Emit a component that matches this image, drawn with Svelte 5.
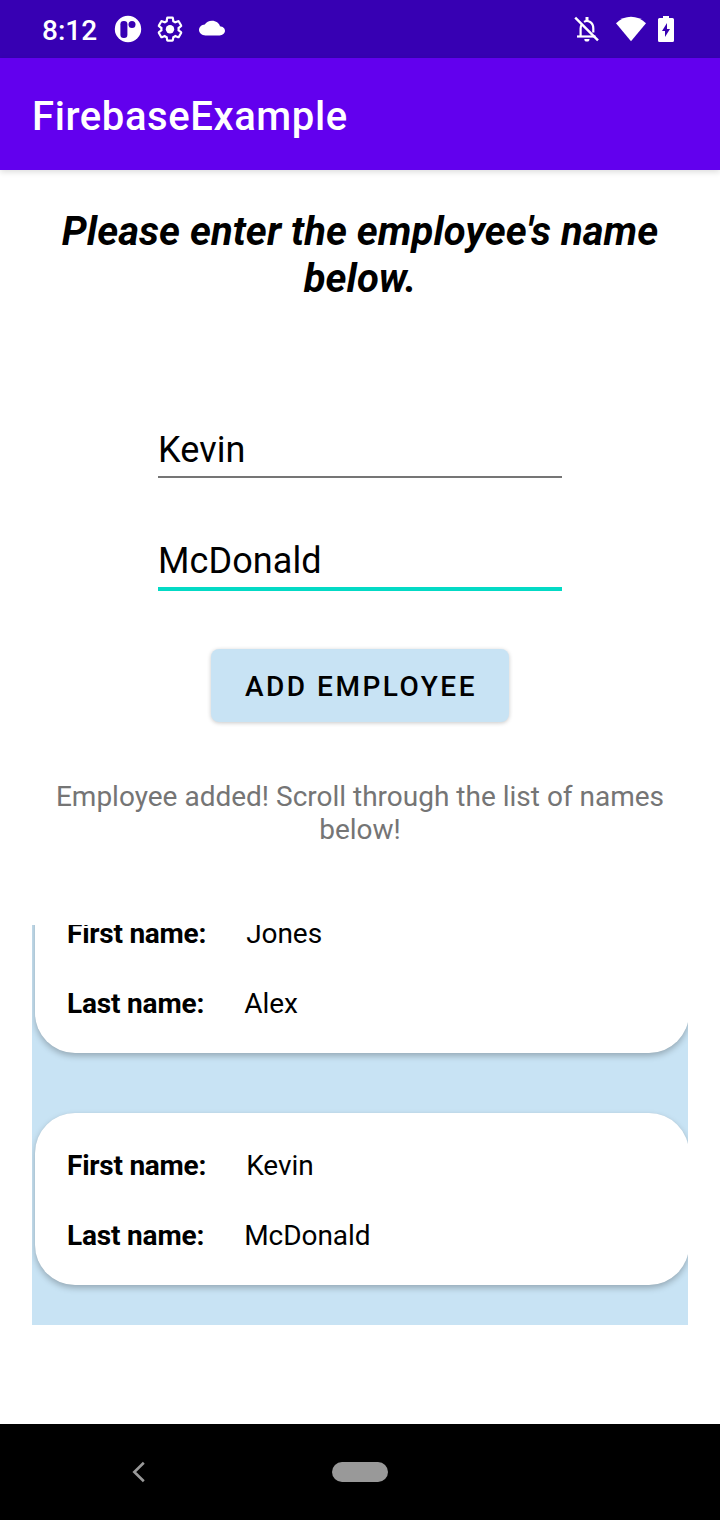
<script>
  let first = $state('Kevin');
  let last = $state('McDonald');
  const employees = [
    { first: 'Jones', last: 'Alex' },
    { first: 'Kevin', last: 'McDonald' }
  ];
</script>

<div class="screen">
  <div class="status">
    <span class="time">8:12</span>
    <svg class="i-app" width="28" height="28" viewBox="0 0 28 28">
      <circle cx="14" cy="14" r="13.2" fill="#fff" />
      <rect x="6.400" y="6" width="7" height="17" rx="3.300" fill="#3700b3" />
      <circle cx="18" cy="9.400" r="3.500" fill="#3700b3" />
    </svg>
    <svg class="i-gear" width="28" height="28" viewBox="0 0 28 28">
      <path transform="translate(.2 .4) scale(1.15)" d="M19.430 12.980c.04-.32.07-.64.07-.98s-.03-.66-.07-.98l2.110-1.650c.19-.15.24-.42.12-.64l-2-3.460c-.12-.22-.39-.3-.61-.22l-2.490 1c-.52-.4-1.080-.73-1.690-.98l-.38-2.650C14.460 2.180 14.250 2 14 2h-4c-.25 0-.46.18-.49.42l-.38 2.650c-.61.25-1.170.59-1.690.98l-2.490-1c-.23-.09-.49 0-.61.22l-2 3.460c-.13.22-.07.49.12.64l2.110 1.650c-.04.32-.07.65-.07.98s.03.66.07.98l-2.110 1.650c-.19.15-.24.42-.12.64l2 3.460c.12.22.39.3.61.22l2.490-1c.52.4 1.080.73 1.690.98l.38 2.650c.03.24.24.42.49.42h4c.25 0 .46-.18.49-.42l.38-2.650c.61-.25 1.170-.59 1.690-.98l2.490 1c.23.09.49 0 .61-.22l2-3.460c.12-.22.07-.49-.12-.64z" fill="none" stroke="#fff" stroke-width="1.900" />
      <circle cx="14" cy="14.200" r="4.200" fill="#fff" />
    </svg>
    <svg class="i-cloud" width="28" height="28" viewBox="0 0 28 28">
      <path transform="translate(1 2.200) scale(1.083 .91)" d="M19.350 10.040C18.670 6.590 15.640 4 12 4 9.110 4 6.600 5.640 5.350 8.040 2.340 8.360 0 10.910 0 14c0 3.310 2.690 6 6 6h13c2.760 0 5-2.240 5-5 0-2.640-2.050-4.780-4.650-4.960z" fill="#fff" />
    </svg>
    <span class="fill"></span>
    <svg class="i-bell" width="28" height="28" viewBox="0 0 28 28" fill="none" stroke="#fff" stroke-width="2.200">
      <path d="M2.200 2.600 25 25.400" stroke-width="2.400" />
      <path d="M4 21.500h18.500" />
      <path d="M7.600 21.500v-8c0-1.600.4-3 1.300-4.200M11 6.900c3-1.900 9.300-.7 9.300 6.600v4" />
      <path d="M14 2v4" stroke-width="3" />
      <path d="M11.300 24h5.200a2.600 2.600 0 0 1-5.200 0z" fill="#fff" stroke="none" />
    </svg>
    <svg class="i-wifi" width="32" height="28" viewBox="0 0 32 28">
      <path d="M1 8.300C9.500-.3 22.500-.3 31 8.300L16 26.300z" fill="#fff" />
    </svg>
    <svg class="i-batt" width="16" height="28" viewBox="0 0 16 28">
      <path d="M5 1h6v2h3.500Q16 3 16 4.500v21Q16 27 14.500 27h-13Q0 27 0 25.500v-21Q0 3 1.500 3H5z" fill="#fff" />
      <path d="M9 8v6h3L7 22v-6H4z" fill="#3700b3" />
    </svg>
  </div>

  <header><h1>FirebaseExample</h1></header>

  <main>
    <h2>Please enter the employee's name below.</h2>
    <form onsubmit={(e) => e.preventDefault()}>
      <input class="first" type="text" bind:value={first} aria-label="First name" />
      <input class="last" type="text" bind:value={last} aria-label="Last name" />
      <button>ADD EMPLOYEE</button>
    </form>
    <p>Employee added! Scroll through the list of names below!</p>
    <div class="list">
      {#each employees as e}
        <div class="card">
          <div class="row"><b>First name:</b><span>{e.first}</span></div>
          <div class="row"><b class="l">Last name:</b><span>{e.last}</span></div>
        </div>
      {/each}
    </div>
  </main>

  <nav>
    <svg width="16" height="24" viewBox="0 0 16 24">
      <path d="M12.800 2.800 3.300 12l9.500 9.200" fill="none" stroke="#999" stroke-width="2.600" />
    </svg>
    <span class="pill"></span>
  </nav>
</div>

<style>
  .screen {
    width: 720px;
    height: 1520px;
    display: flex;
    flex-direction: column;
    background: #fff;
    color: #000;
    font-family: Roboto, sans-serif;
    overflow: hidden;
  }
  .screen * { box-sizing: border-box; }
  svg { display: block; flex: none; }
  .status {
    height: 58px;
    flex: none;
    display: flex;
    align-items: center;
    padding: 0 46px 0 42px;
    background: #3700b3;
  }
  .time {
    width: 72px;
    font-size: 28px;
    font-weight: 500;
    line-height: 33px;
    color: #fff;
    padding-top: 2px;
  }
  .i-gear, .i-cloud { margin-left: 14px; }
  .fill { flex: 1; }
  .i-wifi { margin-left: 14px; }
  .i-batt { margin-left: 11px; }
  header {
    height: 112px;
    flex: none;
    display: flex;
    align-items: center;
    padding: 4px 32px 0;
    background: #6200ee;
    box-shadow: 0 2px 6px rgba(0, 0, 0, 0.14);
  }
  h1 {
    margin: 0;
    font-size: 40px;
    font-weight: 500;
    line-height: 47px;
    letter-spacing: 0.6px;
    color: #fff;
  }
  main {
    flex: 1;
    display: flex;
    flex-direction: column;
    padding: 38px 32px 0;
  }
  h2 {
    margin: 0;
    font-size: 40px;
    font-weight: 700;
    font-style: italic;
    line-height: 47px;
    letter-spacing: 0.05px;
    text-align: center;
  }
  form {
    display: flex;
    flex-direction: column;
    align-items: center;
    margin-top: 126px;
  }
  input {
    width: 404px;
    border: 0;
    border-radius: 0;
    padding: 0;
    background: none;
    outline: none;
    color: #000;
    font: 400 36px/42px Roboto, sans-serif;
    letter-spacing: 0.1px;
  }
  .first { height: 50px; padding-bottom: 4px; border-bottom: 2px solid #757575; }
  .last { height: 52px; margin-top: 61px; padding-bottom: 4px; border-bottom: 4px solid #03dac5; }
  button {
    width: 298px;
    height: 72.5px;
    margin: 58px 0 0 0.5px;
    padding: 2px 0 0 1.5px;
    border: 0;
    border-radius: 8px;
    background: #c8e3f4;
    color: #000;
    font: 500 28px/33px Roboto, sans-serif;
    letter-spacing: 2.5px;
    box-shadow: 0 1px 4px rgba(0, 0, 0, 0.22);
  }
  p {
    margin: 58.5px 0 0;
    font-size: 28px;
    line-height: 33px;
    text-align: center;
    color: #757575;
  }
  .list {
    height: 400px;
    margin-top: 79px;
    padding: 0 0 40px 3px;
    display: flex;
    flex-direction: column;
    justify-content: flex-end;
    gap: 60px;
    background: #c8e3f4;
    overflow: hidden;
  }
  .card {
    flex: none;
    width: 654px;
    height: 172px;
    padding: 36px 32px 0;
    display: flex;
    flex-direction: column;
    gap: 37px;
    border-radius: 40px;
    background: #fff;
    box-shadow: 0 3px 6px rgba(0, 0, 0, 0.25), 0 0 1px rgba(0, 0, 0, 0.06);
  }
  .row { display: flex; gap: 40px; font-size: 28px; line-height: 33px; white-space: nowrap; }
  .row b { letter-spacing: -0.24px; }
  .row .l { letter-spacing: -0.17px; }
  .row span { letter-spacing: -0.06px; }
  nav {
    height: 96px;
    flex: none;
    display: flex;
    align-items: center;
    padding-left: 131px;
    background: #000;
  }
  .pill {
    width: 56px;
    height: 20px;
    margin-left: 185px;
    border-radius: 10px;
    background: #999;
  }
</style>
